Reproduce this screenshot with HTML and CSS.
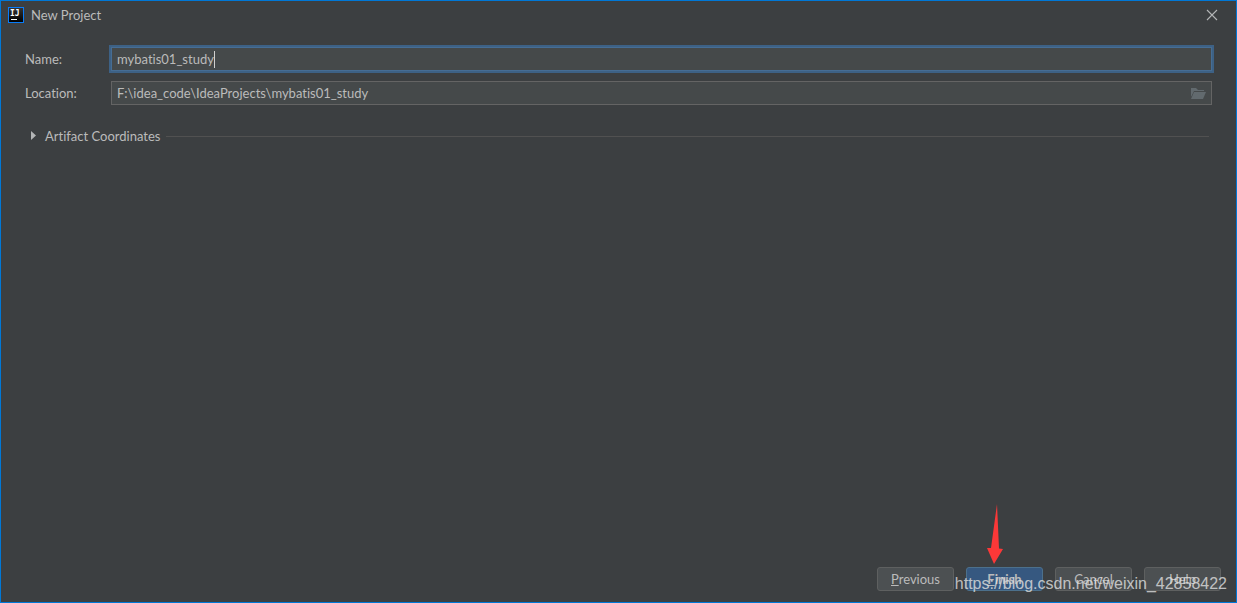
FILE: index.html
```html
<!DOCTYPE html>
<html lang="en">
<head>
<meta charset="utf-8">
<title>New Project</title>
<link rel="stylesheet" href="styles.css">
</head>
<body>
<div class="window">
  <header class="titlebar">
    <svg class="logo" width="16" height="16" viewBox="0 0 16 16" aria-hidden="true">
      <defs><linearGradient id="tile" x1="0" y1="0" x2="0" y2="1"><stop offset="0" stop-color="#333"/><stop offset="1" stop-color="#000"/></linearGradient></defs>
      <rect width="16" height="16" fill="#087cfa"/>
      <rect x="1" y="1" width="14" height="14" fill="url(#tile)"/>
      <text class="logo-text" x="2" y="9">IJ</text>
      <rect x="3" y="12" width="6" height="1" fill="#fff"/>
    </svg>
    <h1 class="title">New Project</h1>
    <button class="close" type="button" aria-label="Close">
      <svg width="12" height="12" viewBox="0 0 12 12"><path d="M1 1 11 11M11 1 1 11" fill="none" stroke="#b4b6b7" stroke-width="1.1"/></svg>
    </button>
  </header>
  <main class="content">
    <div class="form">
      <label class="label" for="name">Name:</label>
      <div class="field focused">
        <input class="input" id="name" type="text" value="mybatis01_study">
        <span class="caret"></span>
      </div>
      <label class="label" for="location">Location:</label>
      <div class="field">
        <input class="input" id="location" type="text" value="F:\idea_code\IdeaProjects\mybatis01_study">
        <button class="browse" type="button" aria-label="Browse">
          <svg width="16" height="12" viewBox="0 0 16 12"><path d="M1 1H6L8 3H14V4H4L1 10Z" fill="#626a6e"/><path d="M4 5H16L13 12H1Z" fill="#626a6e"/></svg>
        </button>
      </div>
    </div>
    <button class="section" type="button" aria-expanded="false">
      <svg class="arrow" width="6" height="10" viewBox="0 0 6 10"><path d="M0 0 5 4.500 0 9Z" fill="#b3b5b6"/></svg>
      <span>Artifact Coordinates</span>
      <span class="rule"></span>
    </button>
  </main>
  <footer class="footer">
    <button class="btn" type="button"><u>P</u>revious</button>
    <button class="btn primary" type="button"><u>F</u>inish</button>
    <button class="btn" type="button">Cancel</button>
    <button class="btn" type="button">Help</button>
    <svg class="pointer" width="18" height="60" viewBox="0 0 18 60" aria-hidden="true"><path d="M11 0 13 44.500 17 45 8 60 1 44 5 44Z" fill="#fb3838"/></svg>
    <span class="watermark">https://blog.csdn.net/weixin_42858422</span>
  </footer>
</div>
</body>
</html>
```
FILE: styles.css
```css
* { box-sizing: border-box; }
body {
  margin: 0;
  background: #3c3f41;
  color: #bbbbbb;
  font: 13px/18px Lato, "Open Sans", sans-serif;
  font-variant-ligatures: none;
}
button, input {
  margin: 0;
  padding: 0;
  border: 0;
  background: none;
  color: inherit;
  font: inherit;
  font-variant-ligatures: none;
}
svg { display: block; }
.window {
  display: flex;
  flex-direction: column;
  min-height: 100vh;
  border: 1px solid #0078d7;
}
.titlebar {
  display: flex;
  align-items: center;
  height: 28px;
  padding: 0 18px 0 7px;
  gap: 7px;
}
.logo-text {
  font: bold 8px "DejaVu Sans Mono", monospace;
  fill: #fff;
}
.title {
  flex: 1;
  margin: 0;
  font-size: 13px;
  font-weight: 400;
}
.content {
  flex: 1;
  padding: 18px 24px 0;
}
.form {
  display: grid;
  grid-template-columns: 86px 1fr;
  align-items: center;
  row-gap: 10px;
}
.field {
  position: relative;
  display: flex;
  align-items: center;
  height: 24px;
  padding: 0 5px;
  border: 1px solid #646464;
  background: #45494a;
}
.focused {
  border-color: #466d94;
  box-shadow: 0 0 0 2px #3d6185;
}
.input {
  flex: 1;
  min-width: 0;
  height: 18px;
  outline: 0;
}
.caret {
  position: absolute;
  left: 102px;
  top: 3px;
  width: 1px;
  height: 17px;
  background: #d0d0d0;
}
.section {
  display: flex;
  align-items: center;
  width: 100%;
  margin-top: 22px;
  padding: 0 3px 0 6px;
}
.arrow { margin-right: 8px; }
.rule {
  flex: 1;
  height: 1px;
  margin-left: 6px;
  background: #515151;
}
.footer {
  position: relative;
  display: flex;
  justify-content: flex-end;
  gap: 12px;
  padding: 0 15px 11px;
}
.btn {
  width: 77px;
  height: 24px;
  border: 1px solid #5e6060;
  border-radius: 3px;
  background: #4c5052;
}
.primary {
  border-color: #4c708c;
  background: #365880;
  font-weight: 700;
}
.pointer {
  position: absolute;
  right: 232px;
  bottom: 38px;
}
.watermark {
  position: absolute;
  right: 9px;
  bottom: 9px;
  color: rgba(225, 225, 225, 0.8);
  font: 16px/18px "Liberation Sans", Arial, sans-serif;
  white-space: nowrap;
  pointer-events: none;
}
```
